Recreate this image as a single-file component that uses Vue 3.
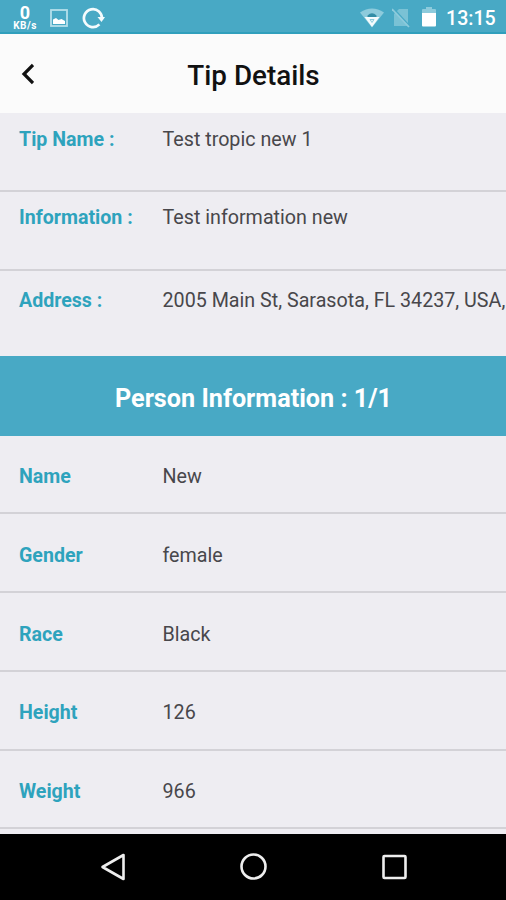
<script setup>
import { ref } from 'vue';

const tipInfo = ref([
  { label: 'Tip Name :', value: 'Test tropic new 1' },
  { label: 'Information :', value: 'Test information new' },
  { label: 'Address :', value: '2005 Main St, Sarasota, FL 34237, USA,' },
]);

const personInfo = ref([
  { label: 'Name', value: 'New' },
  { label: 'Gender', value: 'female' },
  { label: 'Race', value: 'Black' },
  { label: 'Height', value: '126' },
  { label: 'Weight', value: '966' },
]);
</script>

<template>
  <div class="screen">
    <div class="status_bar">
      <div class="status_left">
        <div class="speed">
          <span class="speed_num">0</span>
          <span class="speed_unit">KB/s</span>
        </div>
        <svg class="icon_image" width="18" height="18" viewBox="0 0 18 18">
          <rect x="1" y="1" width="16" height="16" fill="none" stroke="#b4dfea" stroke-width="1.8" />
          <path d="M3 15v-4.500l3-1.500 2.500 2 3-1L15 12v3z" fill="#fff" />
        </svg>
        <svg class="icon_sync" width="24" height="22" viewBox="0 0 24 22">
          <path d="M17.400 17.400A9 9 0 1 1 19.900 12" fill="none" stroke="#f4fbfd" stroke-width="2.700" />
          <path d="M15.500 10h7.500l-3.500 5z" fill="#f4fbfd" />
        </svg>
      </div>
      <div class="status_right">
        <svg class="icon_wifi" width="24" height="20" viewBox="0 0 24 20">
          <path d="M0 4.500Q12-3.500 24 4.500L12 19.500z" fill="#8dcbdc" />
          <path d="M7.500 7.500Q12 3 16.500 7.500V9h-9z" fill="#328da6" />
          <path d="M4.500 9h15L12 19z" fill="#f4fbfd" />
          <path d="M10 11.500h4L12 14.500z" fill="#e5f5f9" stroke="#8dcbdc" stroke-width="1" />
        </svg>
        <svg class="icon_sim" width="18" height="20" viewBox="0 0 18 20">
          <path d="M7 1h9v17H2V6z" fill="#7ac2d5" />
          <path d="M2 1l17 18.500" stroke="#48a9c5" stroke-width="1.600" />
          <path d="M0 1l17 18" stroke="#8dcbdc" stroke-width="1.800" />
        </svg>
        <svg class="icon_battery" width="14" height="20" viewBox="0 0 14 20">
          <path d="M0 3q0-1 1-1h3V0h6v2h3q1 0 1 1v4H0z" fill="#8dcbdc" />
          <path d="M0 6h14v12.500q0 1-1 1H1q-1 0-1-1z" fill="#fff" />
        </svg>
        <span class="time">13:15</span>
      </div>
    </div>

    <header class="header">
      <button class="back">
        <svg width="14" height="22" viewBox="0 0 14 22">
          <path d="M13 2L4 11l9 9" fill="none" stroke="#111" stroke-width="3.200" />
        </svg>
      </button>
      <h1 class="title">Tip Details</h1>
    </header>

    <main class="content">
      <section class="tip">
        <div class="row" v-for="item in tipInfo" :key="item.label">
          <span class="label">{{ item.label }}</span>
          <span class="value">{{ item.value }}</span>
        </div>
      </section>

      <h2 class="banner">Person Information : 1/1</h2>

      <section class="person">
        <div class="row" v-for="item in personInfo" :key="item.label">
          <span class="label">{{ item.label }}</span>
          <span class="value">{{ item.value }}</span>
        </div>
      </section>
    </main>

    <nav class="nav_bar">
      <svg width="26" height="28" viewBox="0 0 26 28">
        <path d="M23.500 2v24L2.500 14z" fill="none" stroke="#eee" stroke-width="2.600" stroke-linejoin="round" />
      </svg>
      <svg width="28" height="28" viewBox="0 0 28 28">
        <circle cx="13.500" cy="13.500" r="12" fill="none" stroke="#eee" stroke-width="2.600" />
      </svg>
      <svg width="26" height="28" viewBox="0 0 26 28">
        <rect x="2.500" y="3" width="22" height="22" rx="1" fill="none" stroke="#eee" stroke-width="2.600" />
      </svg>
    </nav>
  </div>
</template>

<style>
body {
  margin: 0;
  background: #000;
}
</style>

<style scoped>
.screen {
  display: flex;
  flex-direction: column;
  width: 506px;
  height: 900px;
  overflow: hidden;
  background: #eeedf2;
  font-family: Roboto, sans-serif;
}

.status_bar {
  display: flex;
  justify-content: space-between;
  flex: none;
  box-sizing: border-box;
  height: 34px;
  background: #48a9c5;
  border-bottom: 2px solid #309fbc;
  color: #fff;
}

.status_left,
.status_right {
  display: flex;
  align-items: flex-start;
}

.speed {
  display: flex;
  flex-direction: column;
  align-items: center;
  width: 26px;
  margin-left: 12px;
  padding-top: 4px;
}
.speed_num {
  font-size: 18px;
  line-height: 17px;
  font-weight: bold;
}
.speed_unit {
  font-size: 10px;
  line-height: 9px;
  font-weight: bold;
  letter-spacing: 0.5px;
}
.icon_image { margin: 9px 0 0 12px; }
.icon_sync { margin: 7px 0 0 14px; }

.icon_wifi { margin: 8px 8px 0 0; }
.icon_sim { margin: 8px 12px 0 0; }
.icon_battery { margin: 7px 10px 0 0; }
.time {
  width: 60px;
  padding-top: 7px;
  font-size: 19.6px;
  line-height: 24px;
  font-weight: 500;
}

.header {
  display: grid;
  grid-template-columns: 60px 1fr 60px;
  align-items: center;
  flex: none;
  height: 79px;
  background: #fbfbfb;
}
.back {
  display: flex;
  padding: 0 0 0 20px;
  border: 0;
  background: none;
}
.title {
  margin: 4px 0 0;
  padding-left: 1px;
  text-align: center;
  font-size: 27.8px;
  line-height: 32px;
  font-weight: 500;
  color: #111;
}

.content {
  flex: none;
  height: 720.5px;
  overflow: hidden;
}

.row {
  display: flex;
  box-sizing: border-box;
  height: 79px;
  border-bottom: 2px solid #d3d2d7;
  font-size: 19.7px;
  line-height: 24px;
  white-space: nowrap;
}
.label {
  flex: none;
  width: 162.5px;
  box-sizing: border-box;
  padding-left: 19px;
  font-size: 19.6px;
  font-weight: bold;
  color: #2ea3bd;
}
.value { color: #48474b; }

.tip .row { padding-top: 14px; }
.tip .row:first-child { padding-top: 15px; }
.tip .row:last-child {
  height: 85px;
  padding-top: 18px;
  border-bottom: 0;
}

.banner {
  display: flex;
  align-items: center;
  justify-content: center;
  box-sizing: border-box;
  height: 79.5px;
  margin: 0;
  padding: 6px 0 0 1px;
  background: #48a9c5;
  font-size: 25.2px;
  font-weight: bold;
  color: #fff;
}

.person .row {
  height: 78.75px;
  padding-top: 29.5px;
}

.nav_bar {
  display: flex;
  align-items: flex-start;
  justify-content: space-between;
  flex: 1;
  box-sizing: border-box;
  padding: 19px 99px 0 100px;
  background: #000;
}
</style>
